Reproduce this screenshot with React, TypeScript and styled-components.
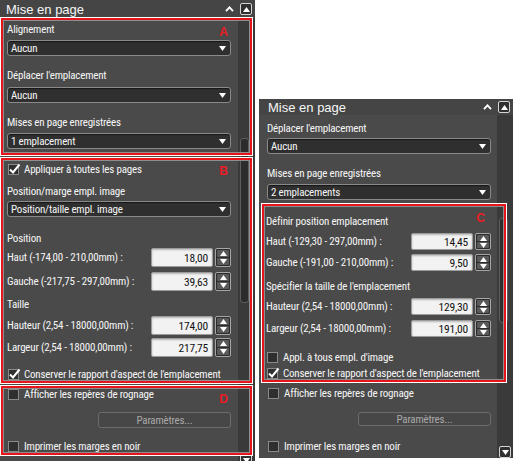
import React from 'react';
import styled, { createGlobalStyle } from 'styled-components';

const GlobalStyle = createGlobalStyle`
  html, body { margin: 0; padding: 0; background: #fff; }
  body { font-family: "Liberation Sans", Arial, sans-serif; }
`;

const Canvas = styled.div`
  width: 513px;
  height: 461px;
  overflow: hidden;
  display: flex;
  align-items: flex-start;
  background: #fff;
`;

const Panel = styled.div<{ $top: number; $left: number; $w: number; $h: number }>`
  flex: none;
  margin-top: ${p => p.$top}px;
  margin-left: ${p => p.$left}px;
  width: ${p => p.$w}px;
  height: ${p => p.$h}px;
  background: #4a4a4a;
  color: #f6f6f6;
  font-family: "Roboto Condensed", "Lato", sans-serif;
  font-size: 11px;
  letter-spacing: -0.2px;
  display: flex;
  flex-direction: column;
`;

const Header = styled.div<{ $h: number; $pl: number }>`
  height: ${p => p.$h}px;
  flex: none;
  display: flex;
  align-items: center;
  padding: 0 3px 0 ${p => p.$pl}px;
  background: #454545;
  font-family: "Liberation Sans", Arial, sans-serif;
  font-size: 13px;
  letter-spacing: 0;
`;

const Title = styled.span`
  flex: 1;
`;

const HeadBtn = styled.span`
  width: 10px;
  height: 10px;
  margin-left: 6px;
  border: 1px solid #d4d4d4;
  border-radius: 2px;
  background: #303030;
  display: flex;
  align-items: center;
  justify-content: center;
`;

const Body = styled.div`
  flex: 1;
  display: flex;
  min-height: 0;
`;

const Content = styled.div`
  flex: 1;
  display: flex;
  flex-direction: column;
  min-width: 0;
`;

const Track = styled.div<{ $w: number }>`
  width: ${p => p.$w}px;
  flex: none;
  background: #3a3a3a;
  display: flex;
  flex-direction: column;
  align-items: flex-start;
  padding-left: 2px;
  box-sizing: border-box;
`;

const Thumb = styled.div`
  width: 7px;
  border: 1px solid #5e5e5e;
  border-radius: 3px;
  background: #2c2c2c;
`;

const DownBtn = styled(HeadBtn)`
  margin: auto 0 0 0;
`;

const Annot = styled.div<{ $mt: number; $ml: number; $mr: number; $pl: number; $pr: number; $pb?: number }>`
  position: relative;
  z-index: 1;
  margin: ${p => p.$mt}px ${p => p.$mr}px 0 ${p => p.$ml}px;
  padding: 0 ${p => p.$pr}px ${p => p.$pb ?? 0}px ${p => p.$pl}px;
  border: 2px solid #e8141c;
  box-shadow: 0 0 0 1px #fff, inset 0 0 0 1px #8e8e8e;
  display: flex;
  flex-direction: column;
`;

const Tag = styled.span<{ $top: number; $right: number }>`
  position: absolute;
  top: ${p => p.$top}px;
  right: ${p => p.$right}px;
  color: #ec1c24;
  font-family: "Liberation Sans", Arial, sans-serif;
  font-weight: bold;
  font-size: 12px;
  line-height: 12px;
  letter-spacing: 0;
`;

const Plain = styled.div<{ $pl: number; $pr: number }>`
  display: flex;
  flex-direction: column;
  padding: 0 ${p => p.$pr}px 0 ${p => p.$pl}px;
`;

const Label = styled.div<{ $mt: number; $h: number }>`
  margin-top: ${p => p.$mt}px;
  height: ${p => p.$h}px;
  display: flex;
  align-items: center;
  white-space: nowrap;
`;

const Select = styled.div<{ $mt: number }>`
  margin-top: ${p => p.$mt}px;
  height: 14px;
  border: 1px solid #8a8a8a;
  border-radius: 3px;
  background: #2f2f2f;
  box-shadow: inset 0 1px 1px rgba(0, 0, 0, 0.5);
  display: flex;
  align-items: center;
  justify-content: space-between;
  padding: 0 4px 0 3px;
`;

const NumRow = styled.div<{ $mt: number; $h: number }>`
  margin-top: ${p => p.$mt}px;
  height: ${p => p.$h}px;
  display: flex;
  align-items: stretch;
`;

const NumLabel = styled.span`
  flex: 1;
  display: flex;
  align-items: center;
  white-space: nowrap;
`;

const Field = styled.div<{ $w: number }>`
  width: ${p => p.$w}px;
  box-sizing: border-box;
  border: 1px solid #9c9c9c;
  border-radius: 2px;
  background: #f2f2f2;
  box-shadow: inset 0 1px 2px rgba(0, 0, 0, 0.25);
  color: #111;
  display: flex;
  align-items: center;
  justify-content: flex-end;
  padding-right: 4px;
  font-size: 11.5px;
`;

const Spin = styled.div`
  width: 16px;
  margin-left: 2px;
  box-sizing: border-box;
  border: 1px solid #a6a6a6;
  border-radius: 2px;
  background: #2c2c2c;
  display: flex;
  flex-direction: column;
  gap: 1px;
  padding: 1px;
`;

const SpinHalf = styled.div`
  flex: 1;
  background: #5a5a5a;
  border-radius: 1px;
  display: flex;
  align-items: center;
  justify-content: center;
`;

const Check = styled.div<{ $mt: number; $h: number }>`
  margin-top: ${p => p.$mt}px;
  height: ${p => p.$h}px;
  display: flex;
  align-items: center;
  white-space: nowrap;
  padding-left: 1px;
`;

const Box = styled.span`
  position: relative;
  flex: none;
  width: 9px;
  height: 9px;
  margin-right: 5px;
  border: 1px solid #8a8a8a;
  background: #2f2f2f;
`;

const Mark = styled.svg`
  position: absolute;
  left: 0;
  top: -2px;
  overflow: visible;
`;

const Button = styled.div<{ $mt: number; $h: number; $w: number }>`
  margin-top: ${p => p.$mt}px;
  margin-left: auto;
  width: ${p => p.$w}px;
  height: ${p => p.$h}px;
  box-sizing: border-box;
  border: 1px solid #6c6c6c;
  border-radius: 3px;
  background: #474747;
  color: #a9a9a9;
  display: flex;
  align-items: center;
  justify-content: center;
`;

const Down = () => (
  <svg width="7" height="5" viewBox="0 0 7 5"><path d="M0 0H7L3.5 5Z" fill="#fff" /></svg>
);
const Up = () => (
  <svg width="7" height="5" viewBox="0 0 7 5"><path d="M0 5H7L3.5 0Z" fill="#fff" /></svg>
);
const Chevron = () => (
  <svg width="9" height="6" viewBox="0 0 9 6"><path d="M1 5.2L4.5 1.3L8 5.2" stroke="#fff" strokeWidth="1.8" fill="none" /></svg>
);

const Dropdown: React.FC<{ mt: number; text: string }> = ({ mt, text }) => (
  <Select $mt={mt}>
    <span>{text}</span>
    <Down />
  </Select>
);

const Num: React.FC<{ mt: number; h: number; w: number; label: string; value: string }> = ({ mt, h, w, label, value }) => (
  <NumRow $mt={mt} $h={h}>
    <NumLabel>{label}</NumLabel>
    <Field $w={w}>{value}</Field>
    <Spin>
      <SpinHalf><Up /></SpinHalf>
      <SpinHalf><Down /></SpinHalf>
    </Spin>
  </NumRow>
);

const CheckRow: React.FC<{ mt: number; h: number; text: string; checked?: boolean }> = ({ mt, h, text, checked }) => (
  <Check $mt={mt} $h={h}>
    <Box>
      {checked && (
        <Mark width="11" height="11" viewBox="0 0 11 11">
          <path d="M1 6.5L4 9.5L10.5 1.5" stroke="#fff" strokeWidth="2" fill="none" />
        </Mark>
      )}
    </Box>
    <span>{text}</span>
  </Check>
);

const PanelHead: React.FC<{ h: number; pl: number }> = ({ h, pl }) => (
  <Header $h={h} $pl={pl}>
    <Title>Mise en page</Title>
    <Chevron />
    <HeadBtn><Up /></HeadBtn>
  </Header>
);

export default function App() {
  return (
    <>
      <GlobalStyle />
      <Canvas>
        <Panel $top={0} $left={0} $w={255} $h={466}>
          <PanelHead h={18} pl={6} />
          <Body>
            <Content>
              <Annot $mt={0} $ml={1} $mr={-14} $pl={4} $pr={19} $pb={4}>
                <Tag $top={6} $right={22}>A</Tag>
                <Label $mt={0} $h={18}>Alignement</Label>
                <Dropdown mt={2} text="Aucun" />
                <Label $mt={10} $h={18}>Déplacer l'emplacement</Label>
                <Dropdown mt={3} text="Aucun" />
                <Label $mt={10} $h={18}>Mises en page enregistrées</Label>
                <Dropdown mt={2} text="1 emplacement" />
              </Annot>
              <Annot $mt={3} $ml={1} $mr={-14} $pl={4} $pr={19}>
                <Tag $top={5} $right={22}>B</Tag>
                <CheckRow mt={0} h={18} text="Appliquer à toutes les pages" checked />
                <Label $mt={5} $h={16}>Position/marge empl. image</Label>
                <Dropdown mt={2} text="Position/taille empl. image" />
                <Label $mt={12} $h={18}>Position</Label>
                <Num mt={1} h={19} w={62} label="Haut (-174,00 - 210,00mm) :" value="18,00" />
                <Num mt={5} h={19} w={62} label="Gauche (-217,75 - 297,00mm) :" value="39,63" />
                <Label $mt={4} $h={18}>Taille</Label>
                <Num mt={3} h={19} w={62} label="Hauteur (2,54 - 18000,00mm) :" value="174,00" />
                <Num mt={3} h={19} w={62} label="Largeur (2,54 - 18000,00mm) :" value="217,75" />
                <CheckRow mt={10} h={14} text="Conserver le rapport d'aspect de l'emplacement" checked />
              </Annot>
              <Annot $mt={3} $ml={1} $mr={-14} $pl={4} $pr={19}>
                <Tag $top={5} $right={22}>D</Tag>
                <CheckRow mt={0} h={13} text="Afficher les repères de rognage" />
                <Button $mt={11} $h={16} $w={133}>Paramètres...</Button>
                <CheckRow mt={12} h={13} text="Imprimer les marges en noir" />
              </Annot>
            </Content>
            <Track $w={17}>
              <Thumb style={{ marginTop: 120, height: 163 }} />
              <DownBtn><Down /></DownBtn>
            </Track>
          </Body>
        </Panel>

        <Panel $top={99} $left={4} $w={254} $h={359}>
          <PanelHead h={16} pl={9} />
          <Body>
            <Content>
              <Plain $pl={8} $pr={6}>
                <Label $mt={4} $h={18}>Déplacer l'emplacement</Label>
                <Dropdown mt={1} text="Aucun" />
                <Label $mt={10} $h={18}>Mises en page enregistrées</Label>
                <Dropdown mt={2} text="2 emplacements" />
              </Plain>
              <Annot $mt={4} $ml={3} $mr={-9} $pl={2} $pr={13}>
                <Tag $top={6} $right={19}>C</Tag>
                <Label $mt={6} $h={18}>Définir position emplacement</Label>
                <Num mt={3} h={17} w={62} label="Haut (-129,30 - 297,00mm) :" value="14,45" />
                <Num mt={4} h={17} w={62} label="Gauche (-191,00 - 210,00mm) :" value="9,50" />
                <Label $mt={6} $h={18}>Spécifier la taille de l'emplacement</Label>
                <Num mt={3} h={17} w={62} label="Hauteur (2,54 - 18000,00mm) :" value="129,30" />
                <Num mt={5} h={17} w={62} label="Largeur (2,54 - 18000,00mm) :" value="191,00" />
                <CheckRow mt={13} h={14} text="Appl. à tous empl. d'image" />
                <CheckRow mt={2} h={14} text="Conserver le rapport d'aspect de l'emplacement" checked />
              </Annot>
              <Plain $pl={8} $pr={6}>
                <CheckRow mt={4} h={14} text="Afficher les repères de rognage" />
                <Button $mt={12} $h={14} $w={133}>Paramètres...</Button>
                <CheckRow mt={13} h={14} text="Imprimer les marges en noir" />
              </Plain>
            </Content>
            <Track $w={16}>
              <Thumb style={{ marginTop: 103, height: 103 }} />
              <DownBtn><Down /></DownBtn>
            </Track>
          </Body>
        </Panel>
      </Canvas>
    </>
  );
}
